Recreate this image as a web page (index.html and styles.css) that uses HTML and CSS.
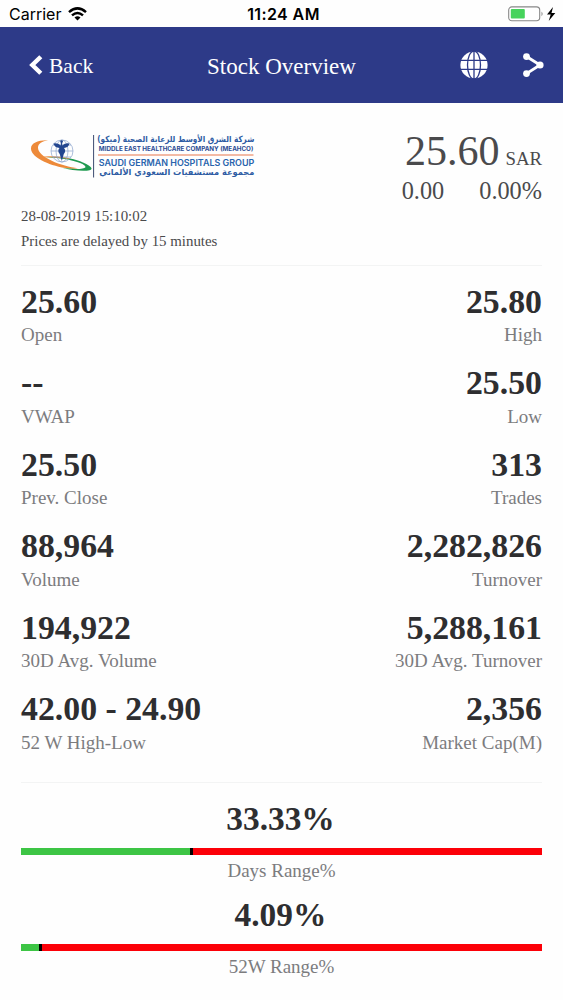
FILE: index.html
```
<!DOCTYPE html>
<html lang="en">
<head>
  <meta charset="UTF-8">
  <title>Stock Overview</title>
  <meta name="viewport" content="width=device-width, initial-scale=1.0">
  <link rel="stylesheet" href="styles.css">
</head>
<body>
  <div class="status-bar">
    <div class="carrier">
      <span>Carrier</span>
      <svg width="19" height="14" viewBox="0 0 19 14" fill="none" stroke="#000" stroke-width="2.5">
        <path d="M1 5.1 Q9.5 -2.3 18 5.1"/>
        <path d="M4 8.4 Q9.5 3.6 15 8.4"/>
        <path d="M6.5 10.5 Q9.5 8 12.5 10.5 L9.5 13.5 Z" fill="#000" stroke="none"/>
      </svg>
    </div>
    <div class="time">11:24 AM</div>
    <svg class="battery" width="48" height="16" viewBox="0 0 48 16">
      <rect x="0.7" y="0.9" width="31" height="13.8" rx="3.2" fill="#fff" stroke="#888" stroke-width="1.1"/>
      <rect x="2.8" y="3" width="14" height="9.6" rx="1" fill="#46d35c"/>
      <path d="M33.5 5.5 Q35.8 7.8 33.5 10.2 Z" fill="#888"/>
      <path d="M45 1 L39 8.6 L42.7 8.6 L40.7 15 L47.3 6.9 L43.5 6.9 Z" fill="#000"/>
    </svg>
  </div>

  <header class="nav-bar">
    <div class="back">
      <svg width="14" height="20" viewBox="0 0 14 20" fill="none" stroke="#fff" stroke-width="4.4">
        <path d="M11.8 1.7 L3.3 10 L11.8 18.3"/>
      </svg>
      <span>Back</span>
    </div>
    <h1>Stock Overview</h1>
    <div class="actions">
      <svg width="28" height="28" viewBox="0 0 28 28">
        <circle cx="14" cy="14" r="13.6" fill="#fff"/>
        <g fill="none" stroke="#2d3a88" stroke-width="1.3">
          <ellipse cx="14" cy="14" rx="6.5" ry="14"/>
          <path d="M14 0 V28 M0 9.4 H28 M0 18.4 H28"/>
        </g>
      </svg>
      <svg width="22" height="25" viewBox="0 0 22 25" fill="#fff">
        <path d="M4.5 3.6 L18 12 L4.5 20.6" fill="none" stroke="#fff" stroke-width="2.9"/>
        <circle cx="4.5" cy="3.6" r="3.4"/>
        <circle cx="18" cy="12" r="3.6"/>
        <circle cx="4.5" cy="20.6" r="3.4"/>
      </svg>
    </div>
  </header>

  <main>
    <section class="summary">
      <div class="company">
        <svg class="logo" width="226" height="48" viewBox="30 132 226 48">
          <path d="M48 140.3 C38 140 31 143 31 148.5 C31 156 44 163.5 62 167.5 C70 169 75 169 78 168.3 C62 166.5 37.5 157 38 147.5 C38.2 143.5 42 141.3 48 140.3 Z" fill="#ed8a3a"/>
          <path d="M46 157.5 C60 156 74 158.5 83 162.5 C91 166 94 169 89.5 170.3 C84 171.6 71 170.5 62 167.8 C74 169.5 84 169.3 85.5 167.2 C86.5 163.5 66 157.5 46 157.5 Z" fill="#1f9a50"/>
          <path d="M44 157 C53 156 62 156.7 70 158.6 C62 157.5 53 157 44 157 Z" fill="#ed8a3a" stroke="#ed8a3a" stroke-width="0.4"/>
          <g fill="none" stroke="#8ba3cd" stroke-width="0.7">
            <circle cx="62" cy="151" r="11"/>
            <ellipse cx="62" cy="151" rx="6" ry="11"/>
            <path d="M51 151 H73 M53 145 H71 M53 157 H71"/>
          </g>
          <path d="M53.5 143.5 Q57.5 142.5 60.8 145.5 L60.8 142 H62.2 L62.2 145.5 Q65.5 142.5 69.5 143.5 Q68.5 147.5 64 148 Q66.5 151 63.8 154 L61.8 161 L59.7 154 Q57 151 59.5 148 Q54.5 147.5 53.5 143.5 Z" fill="#23468f"/>
          <circle cx="61.6" cy="141.5" r="1.3" fill="#23468f"/>
          <path d="M93.6 135 V177.5" stroke="#3c4a70" stroke-width="1"/>
          <path d="M98 155 H253.5" stroke="#e8774b" stroke-width="1"/>
          <g class="logo-arabic" text-anchor="middle">
            <text x="175.8" y="142" textLength="157" lengthAdjust="spacingAndGlyphs">شركة الشرق الأوسط للرعاية الصحية (ميكو)</text>
            <text x="176.8" y="175" textLength="155" lengthAdjust="spacingAndGlyphs">مجموعة مستشفيات السعودي الألماني</text>
          </g>
          <g class="logo-latin">
            <text x="98.8" y="151" font-size="5.9" textLength="154.5" lengthAdjust="spacingAndGlyphs">MIDDLE EAST HEALTHCARE COMPANY (MEAHCO)</text>
            <text class="group-name" x="98.8" y="165.5" font-size="8.3" textLength="155.5" lengthAdjust="spacingAndGlyphs">SAUDI GERMAN HOSPITALS GROUP</text>
          </g>
        </svg>
        <p>28-08-2019 15:10:02</p>
        <p>Prices are delayed by 15 minutes</p>
      </div>
      <div class="quote">
        <div class="price"><span>25.60</span><small>SAR</small></div>
        <div class="change"><span>0.00</span><span>0.00%</span></div>
      </div>
    </section>

    <section class="stats">
      <div class="stat"><strong>25.60</strong><span>Open</span></div>
      <div class="stat"><strong>25.80</strong><span>High</span></div>
      <div class="stat"><strong>--</strong><span>VWAP</span></div>
      <div class="stat"><strong>25.50</strong><span>Low</span></div>
      <div class="stat"><strong>25.50</strong><span>Prev. Close</span></div>
      <div class="stat"><strong>313</strong><span>Trades</span></div>
      <div class="stat"><strong>88,964</strong><span>Volume</span></div>
      <div class="stat"><strong>2,282,826</strong><span>Turnover</span></div>
      <div class="stat"><strong>194,922</strong><span>30D Avg. Volume</span></div>
      <div class="stat"><strong>5,288,161</strong><span>30D Avg. Turnover</span></div>
      <div class="stat"><strong>42.00 - 24.90</strong><span>52 W High-Low</span></div>
      <div class="stat"><strong>2,356</strong><span>Market Cap(M)</span></div>
    </section>

    <section class="ranges">
      <div class="range">
        <strong>33.33%</strong>
        <div class="bar"><div class="fill" style="width: 33%"></div></div>
        <span>Days Range%</span>
      </div>
      <div class="range">
        <strong>4.09%</strong>
        <div class="bar"><div class="fill" style="width: 4.09%"></div></div>
        <span>52W Range%</span>
      </div>
    </section>
  </main>
</body>
</html>
```
FILE: styles.css
```
* { box-sizing: border-box; }
body { font-family: 'Liberation Serif', 'Times New Roman', serif; background: #fefefe; color: #4a4a4c; margin: 0; height: 1000px; overflow: hidden; }
h1, p { margin: 0; font-weight: normal; }
svg { display: block; flex: none; }

.status-bar {
  display: grid; grid-template-columns: 1fr auto 1fr; align-items: center;
  height: 27px; padding: 1px 7px 0 9px;
  font-family: Inter, 'Liberation Sans', sans-serif; font-size: 16px; color: #000;
}
.carrier { display: flex; align-items: center; gap: 7px; }
.time { font-weight: 600; letter-spacing: 0.4px; margin-left: 2px; }
.battery { justify-self: end; }

.nav-bar {
  display: grid; grid-template-columns: 1fr auto 1fr; align-items: center;
  height: 76px; padding: 0 19px 0 29px;
  background: #2d3a88; color: #fff;
}
.back { display: flex; align-items: center; gap: 6px; font-size: 21.5px; }
.back span { padding-top: 2px; }
.nav-bar h1 { font-size: 23px; margin-right: 10px; padding-top: 3px; }
.actions { display: flex; align-items: center; justify-content: flex-end; gap: 34px; }

main { padding: 0 21px; }
.summary { display: flex; justify-content: space-between; height: 163px; padding-top: 29px; border-bottom: 1px solid #f3f4f4; }
.logo { margin: 0 0 24px 9px; overflow: visible; }
.logo-arabic { font-family: 'DejaVu Sans', sans-serif; font-size: 8.5px; font-weight: bold; fill: #2d5ba3; direction: rtl; }
.logo-latin { font-family: Inter, 'Liberation Sans', sans-serif; font-weight: 700; fill: #2b4c94; }
.group-name { fill: #2964ad; font-weight: 600; }
.company p { font-size: 14.9px; line-height: 25px; }
.quote { text-align: right; }
.price { display: flex; align-items: baseline; justify-content: flex-end; gap: 6px; font-size: 42px; line-height: 38px; }
.price small { font-size: 18.8px; line-height: 20px; }
.change { display: flex; justify-content: flex-end; gap: 35px; font-size: 24.3px; line-height: 38px; margin-top: 2px; }

.stats { display: grid; grid-template-columns: 1fr 1fr; row-gap: 16.5px; height: 517px; padding-top: 14.5px; align-content: start; border-bottom: 1px solid #f3f4f4; }
.stat { display: flex; flex-direction: column; }
.stat:nth-child(even) { text-align: right; }
strong { font-size: 33.8px; line-height: 41px; color: #2e2e30; }
.stat span, .range span { font-size: 19px; line-height: 24px; color: #7c7c7e; }
.stat span { padding-top: 1.5px; margin-bottom: -1.5px; }

.ranges { padding-top: 15px; }
.range { display: flex; flex-direction: column; align-items: center; height: 96.3px; }
.range strong { line-height: 41px; margin-left: -2px; font-size: 33.4px; }
.bar { width: 100%; height: 7px; margin: 9px 0 3px; background: #fc0008; }
.range span { padding-top: 0.5px; }
.fill { height: 100%; background: #3dc545; border-right: 3px solid #000; }
```
